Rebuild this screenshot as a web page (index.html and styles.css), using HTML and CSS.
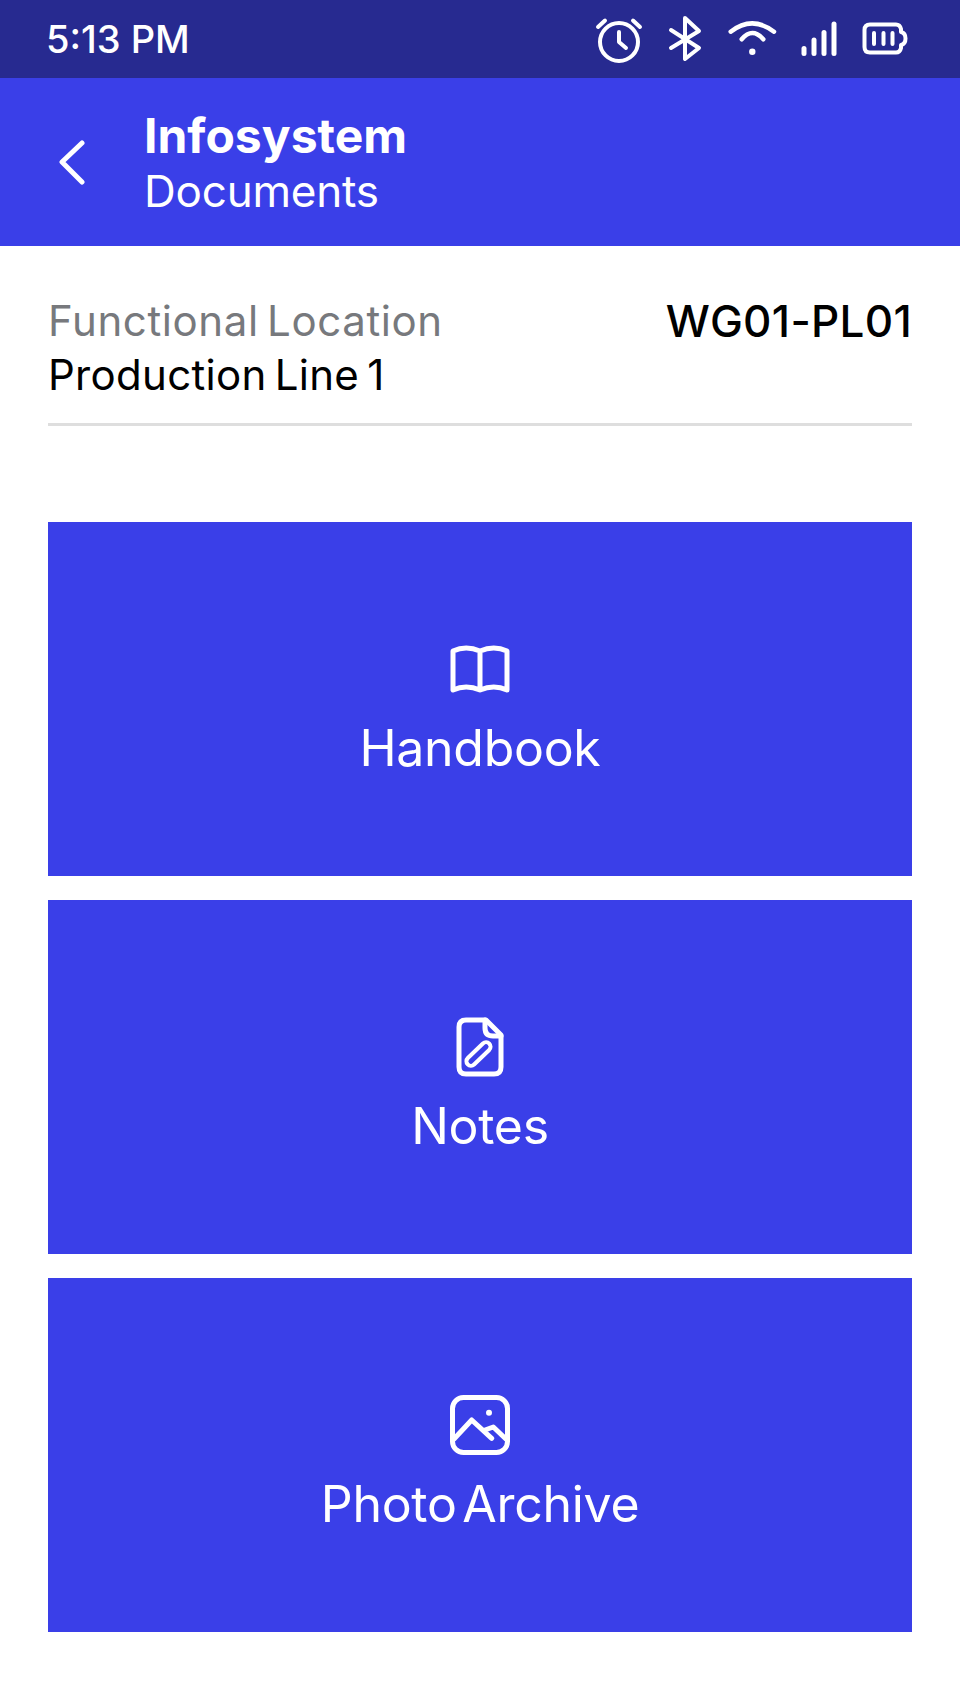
FILE: index.html
```html
<!DOCTYPE html>
<html lang="en">
<head>
    <meta charset="UTF-8">
    <meta name="viewport" content="width=device-width, initial-scale=1.0">
    <title>Documents</title>
    <link rel="stylesheet" href="styles.css">
</head>
<body>
    <!-- status bar -->
    <div class="status-bar">
        <span class="status-time">5:13 PM</span>
        <div class="status-icons">
            <svg class="icon-alarm" viewBox="0 0 48 48" width="48" height="48">
                <circle cx="24" cy="26" r="19"/>
                <path d="M3 11L10 4.500M38 4.500L45 11M24 16V26L31 32"/>
            </svg>
            <svg class="icon-bluetooth" viewBox="0 0 34 46" width="34" height="46">
                <path d="M3 14L31 32L17 43V2L31 15L3 32"/>
            </svg>
            <svg class="icon-wifi" viewBox="0 0 52 46" width="52" height="46">
                <path d="M4.7 13.700Q26 -3 48 13.700M15.700 21.300Q26.300 8.700 37.300 21.300"/>
                <circle class="solid" cx="26.300" cy="33.700" r="3.200"/>
            </svg>
            <svg class="icon-signal" viewBox="0 0 38 38" width="38" height="38">
                <rect class="solid" x="1.500" y="26" width="5" height="10" rx="2.500"/>
                <rect class="solid" x="11.500" y="17.500" width="5" height="18.500" rx="2.500"/>
                <rect class="solid" x="21.500" y="10" width="5" height="26" rx="2.500"/>
                <rect class="solid" x="31.500" y="1.500" width="5" height="34.500" rx="2.500"/>
            </svg>
            <svg class="icon-battery" viewBox="0 0 48 38" width="48" height="38">
                <path d="M10 4.500H36Q40 4.500 41 9V12Q45.500 13 45.500 18.500Q45.500 24 41 25V28Q40 32.500 36 32.500H10Q4.500 32.500 4.500 27V10Q4.500 4.500 10 4.500Z"/>
                <path d="M14 13V24M23.500 13V24M32.500 13V24"/>
            </svg>
        </div>
    </div>

    <!-- header -->
    <div class="app-header">
        <svg class="icon-back" viewBox="0 0 30 46" width="30" height="46">
            <path d="M24 4L4 23L24 43"/>
        </svg>
        <div class="header-titles">
            <div class="header-title">Infosystem</div>
            <div class="header-subtitle">Documents</div>
        </div>
    </div>

    <div class="content">
        <div class="location">
            <div>
                <div class="location-label">Functional Location</div>
                <div class="location-name">Production Line 1</div>
            </div>
            <div class="location-code">WG01-PL01</div>
        </div>

        <div class="doc-list">
            <a class="doc-card" href="#">
                <span class="doc-icon">
                    <svg viewBox="0 0 60 48" width="60" height="48">
                        <path d="M3 6Q16 0 30 6Q44 0 57 6V45Q44 39 30 45Q16 39 3 45ZM30 6V45"/>
                    </svg>
                </span>
                <span class="doc-label">Handbook</span>
            </a>
            <a class="doc-card" href="#">
                <span class="doc-icon">
                    <svg viewBox="0 0 48 60" width="48" height="60">
                        <path d="M10 3H30L45 18V50Q45 57 38 57H10Q3 57 3 50V10Q3 3 10 3Z"/>
                        <path d="M29 3V11Q29 19 37 19H45"/>
                        <rect class="thin" x="-15" y="-4.500" width="30" height="9" rx="4.500" transform="translate(22.500 37) rotate(-44)"/>
                    </svg>
                </span>
                <span class="doc-label">Notes</span>
            </a>
            <a class="doc-card" href="#">
                <span class="doc-icon">
                    <svg viewBox="0 0 60 60" width="60" height="60">
                        <rect x="2.500" y="2.500" width="55" height="55" rx="11"/>
                        <path d="M4 44L21.700 25L41.700 43.300M35 35L43.300 32L57 45"/>
                        <circle class="solid" cx="39" cy="17.700" r="3"/>
                    </svg>
                </span>
                <span class="doc-label">Photo Archive</span>
            </a>
        </div>
    </div>
</body>
</html>
```

FILE: styles.css
```css
body {
    margin: 0;
    font-family: Inter, "Open Sans", sans-serif;
    background-color: #fff;
    color: #000;
}

svg {
    display: block;
    fill: none;
    stroke: #fff;
    stroke-width: 4;
    stroke-linecap: round;
    stroke-linejoin: round;
}
svg .solid {
    fill: #fff;
    stroke: none;
}

/* status bar */
.status-bar {
    height: 78px;
    background-color: #272a90;
    color: #fff;
    display: flex;
    align-items: center;
    justify-content: space-between;
    padding: 0 52px 0 46px;
}
.status-time {
    font-size: 38px;
    font-weight: 500;
}
.status-icons {
    display: flex;
    align-items: center;
}
.icon-alarm {
    margin: 2px 25px 0 0;
}
.icon-bluetooth {
    margin-right: 24px;
}
.icon-wifi {
    margin: 4px 22px 0 0;
    stroke-width: 4.500;
}
.icon-signal {
    margin-right: 22px;
}

/* header */
.app-header {
    height: 168px;
    background-color: #3a3fe8;
    color: #fff;
    display: flex;
    align-items: center;
}
.icon-back {
    margin-left: 58px;
    stroke-width: 5;
}
.header-titles {
    margin-left: 56px;
    padding-top: 2px;
}
.header-title {
    font-size: 48px;
    font-weight: 700;
    line-height: 56px;
}
.header-subtitle {
    font-size: 44px;
    line-height: 55px;
    letter-spacing: -0.2px;
}

.content {
    padding: 0 48px;
}

/* location row */
.location {
    display: flex;
    justify-content: space-between;
    padding-top: 48px;
    padding-bottom: 21px;
    border-bottom: 3px solid #dedede;
    font-size: 42px;
    line-height: 54px;
    word-spacing: -4px;
}
.location-label {
    color: #77797d;
    letter-spacing: 0.6px;
}
.location-name {
    letter-spacing: 0.3px;
}
.location-code {
    font-size: 44px;
    font-weight: 500;
    letter-spacing: 0.3px;
}

/* document cards */
.doc-list {
    display: flex;
    flex-direction: column;
    gap: 24px;
    margin-top: 96px;
}
.doc-card {
    height: 354px;
    background-color: #3a3fe8;
    color: #fff;
    text-decoration: none;
    display: flex;
    flex-direction: column;
    align-items: center;
    padding-top: 117px;
    box-sizing: border-box;
}
.doc-icon {
    height: 60px;
    display: flex;
    align-items: center;
}
.doc-card svg {
    stroke-width: 5;
}
.doc-card svg .thin {
    stroke-width: 4;
}
.doc-label {
    font-size: 50px;
    line-height: 60px;
    margin-top: 19px;
    letter-spacing: -0.3px;
    word-spacing: -8px;
}
```
